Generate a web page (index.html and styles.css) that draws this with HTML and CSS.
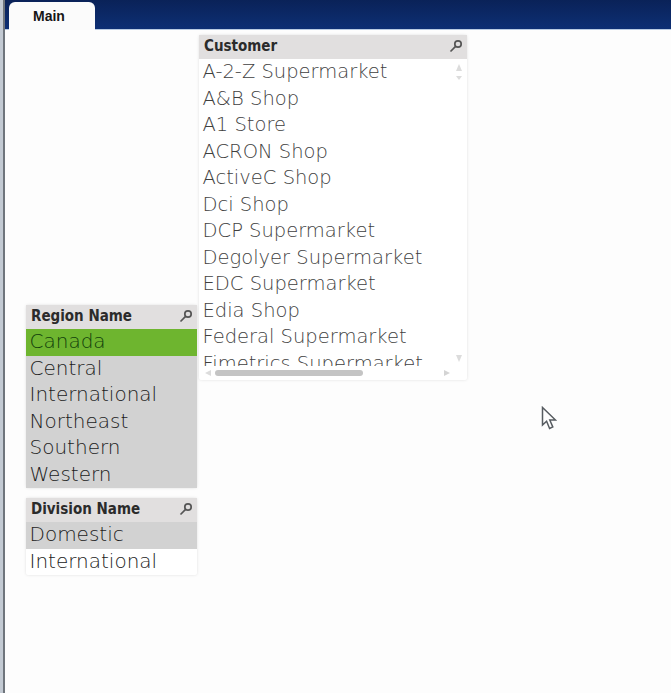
FILE: index.html
```html
<!DOCTYPE html>
<html lang="en">
<head>
    <meta charset="UTF-8">
    <meta name="viewport" content="width=device-width, initial-scale=1.0">
    <title>Main</title>
    <link rel="stylesheet" href="styles.css">
</head>
<body>
    <div class="window">
        <div class="tabbar">
            <div class="tab">Main</div>
        </div>
        <div class="sheet">
            <div class="listbox customer">
                <div class="listbox-head">
                    <span>Customer</span>
                    <svg class="search" viewBox="0 0 14 14"><circle cx="9" cy="5" r="3.2"/><path d="M6.6 7.4 1.5 12.5"/></svg>
                </div>
                <div class="customer-body">
                    <div class="rows">
                        <div class="row">A-2-Z Supermarket</div>
                        <div class="row">A&amp;B Shop</div>
                        <div class="row">A1 Store</div>
                        <div class="row">ACRON Shop</div>
                        <div class="row">ActiveC Shop</div>
                        <div class="row">Dci Shop</div>
                        <div class="row">DCP Supermarket</div>
                        <div class="row">Degolyer Supermarket</div>
                        <div class="row">EDC Supermarket</div>
                        <div class="row">Edia Shop</div>
                        <div class="row">Federal Supermarket</div>
                        <div class="row">Fimetrics Supermarket</div>
                    </div>
                    <div class="vscroll">
                        <div class="arrows">
                            <i class="arrow up"></i>
                            <i class="arrow down small"></i>
                        </div>
                        <i class="arrow down"></i>
                    </div>
                </div>
                <div class="hscroll">
                    <i class="arrow left"></i>
                    <div class="thumb"></div>
                    <i class="arrow right"></i>
                </div>
            </div>

            <div class="listbox region">
                <div class="listbox-head">
                    <span>Region Name</span>
                    <svg class="search" viewBox="0 0 14 14"><circle cx="9" cy="5" r="3.2"/><path d="M6.6 7.4 1.5 12.5"/></svg>
                </div>
                <div class="row selected">Canada</div>
                <div class="row excluded">Central</div>
                <div class="row excluded">International</div>
                <div class="row excluded">Northeast</div>
                <div class="row excluded">Southern</div>
                <div class="row excluded">Western</div>
            </div>

            <div class="listbox division">
                <div class="listbox-head">
                    <span>Division Name</span>
                    <svg class="search" viewBox="0 0 14 14"><circle cx="9" cy="5" r="3.2"/><path d="M6.6 7.4 1.5 12.5"/></svg>
                </div>
                <div class="row excluded">Domestic</div>
                <div class="row">International</div>
            </div>

            <svg class="cursor" viewBox="0 0 16 25"><path d="M1.5 1.5V19L5.6 15.2 8.6 22.5 11.8 21 8.8 14H14.5Z"/></svg>
        </div>
    </div>
</body>
</html>
```

FILE: styles.css
```css
html, body {
    height: 100%;
    margin: 0;
    overflow: hidden;
}
body {
    font-family: "DejaVu Sans", sans-serif;
    background-color: #fdfdfd;
}
.window {
    height: 100%;
    display: flex;
    flex-direction: column;
    box-sizing: border-box;
    border-left: 3px solid #c3cad3;
    box-shadow: inset 2px 0 0 #6f757c;
    padding-left: 2px;
}
.tabbar {
    height: 30px;
    flex-shrink: 0;
    display: flex;
    align-items: flex-end;
    padding-left: 4px;
    box-sizing: border-box;
    background: linear-gradient(#0a2258, #0d2f74);
    border-bottom: 1px solid #b9cbe2;
}
.tab {
    width: 86px;
    height: 28px;
    margin-bottom: -1px;
    box-sizing: border-box;
    padding: 6px 0 0 24px;
    font-family: "Liberation Sans", Arial, sans-serif;
    font-size: 14px;
    font-weight: bold;
    color: #161616;
    background-color: #fbfbfb;
    border-radius: 6px 6px 0 0;
}
.sheet {
    flex: 1;
    position: relative;
}

/* list boxes sit on a free canvas, same as the sheet objects */
.listbox {
    position: absolute;
    background-color: #ffffff;
    border-radius: 2px;
    box-shadow: 0 0 3px rgba(0, 0, 0, 0.12);
}
.customer {
    left: 194px;
    top: 5px;
    width: 268px;
}
.region {
    left: 21px;
    top: 275px;
    width: 171px;
    background-color: #d2d2d2;
}
.division {
    left: 21px;
    top: 468px;
    width: 171px;
}
.listbox-head {
    height: 24px;
    display: flex;
    align-items: center;
    justify-content: space-between;
    box-sizing: border-box;
    padding: 0 4px 3px 5px;
    font-stretch: condensed;
    font-size: 15px;
    font-weight: bold;
    color: #2b2b2b;
    background-color: #e1dfdf;
}
.search {
    width: 14px;
    height: 14px;
    fill: none;
    stroke: #555;
    stroke-width: 1.7;
}
.row {
    height: 26.5px;
    line-height: 25px;
    padding-left: 3.5px;
    font-size: 20px;
    font-weight: 200;
    white-space: nowrap;
    color: #222;
}
.customer .row {
    line-height: 26px;
    font-size: 19.5px;
    color: #3f3f3f;
}
.selected {
    background-color: #6eb52f;
    color: #123f0c;
}
.excluded {
    background-color: #d2d2d2;
    color: #1c1c1c;
}
.customer-body {
    height: 307px;
    display: flex;
    overflow: hidden;
}
.rows {
    flex: 1;
    overflow: hidden;
}
.vscroll {
    width: 16px;
    display: flex;
    flex-direction: column;
    justify-content: space-between;
    align-items: center;
    padding: 5px 0 4px;
    box-sizing: border-box;
}
.arrows {
    display: flex;
    flex-direction: column;
    gap: 5px;
    align-items: center;
}
.hscroll {
    height: 14px;
    display: flex;
    align-items: center;
    padding: 0 17px 0 6px;
}
.thumb {
    width: 148px;
    height: 6px;
    margin-left: 4px;
    background-color: #c4c4c4;
    border-radius: 3px;
}
.arrow {
    display: block;
    width: 0;
    height: 0;
    border-style: solid;
    border-color: transparent;
}
.arrow.up {
    border-width: 0 3.5px 7px;
    border-bottom-color: #dcdcdc;
}
.arrow.down {
    border-width: 7px 3.5px 0;
    border-top-color: #dcdcdc;
}
.arrow.down.small {
    border-width: 4px 3px 0;
}
.arrow.left {
    border-width: 3px 6px 3px 0;
    border-right-color: #dcdcdc;
}
.arrow.right {
    margin-left: auto;
    border-width: 3px 0 3px 6px;
    border-left-color: #d4d4d4;
}
.cursor {
    position: absolute;
    left: 536px;
    top: 376px;
    width: 16px;
    height: 25px;
    fill: #fdfdfd;
    stroke: #565b60;
    stroke-width: 1.5;
}
```
